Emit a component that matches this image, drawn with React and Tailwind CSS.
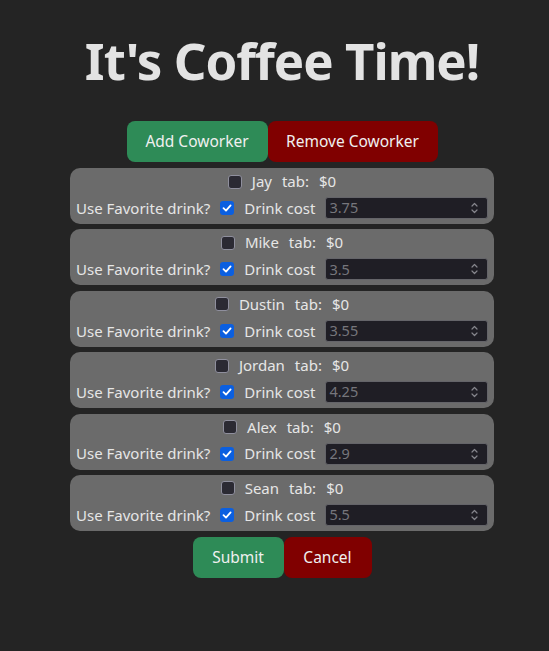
import React from "react";

const people = [
  { name: "Jay", cost: "3.75" },
  { name: "Mike", cost: "3.5" },
  { name: "Dustin", cost: "3.55" },
  { name: "Jordan", cost: "4.25" },
  { name: "Alex", cost: "2.9" },
  { name: "Sean", cost: "5.5" },
];

function Unchecked() {
  return (
    <span className="inline-block w-[14px] h-[14px] rounded-[3px] border border-[#8f8f9d] bg-[#2b2a33] shrink-0" />
  );
}

function Checked() {
  return (
    <span className="inline-flex items-center justify-center w-[14px] h-[14px] rounded-[3px] bg-[#0b5fe0] shrink-0">
      <svg width="10" height="10" viewBox="0 0 10 10" fill="none">
        <path d="M1.5 5.2 L4 7.6 L8.6 2.4" stroke="white" strokeWidth="1.8" strokeLinecap="round" strokeLinejoin="round" />
      </svg>
    </span>
  );
}

function Card({ p }) {
  return (
    <div className="w-[424px] h-[56px] bg-[#6b6b6b] rounded-[10px] pt-[3px] flex flex-col text-[#e6e6e6]">
      <div className="h-[21px] flex items-center justify-center gap-[10px] leading-[21px]">
        <Unchecked />
        <span>{p.name}</span>
        <span>tab:</span>
        <span>$0</span>
      </div>
      <div className="mt-[5px] h-[22px] flex items-center gap-[10px] pl-[6px] pr-[6px]">
        <span className="whitespace-nowrap">Use Favorite drink?</span>
        <Checked />
        <span className="whitespace-nowrap">Drink cost</span>
        <div className="flex-1 h-[22px] bg-[#1f1e25] border border-[#646469] rounded-[3px] flex items-center pl-[3px] pr-[8px] text-[#76767c] text-[14.5px]">
          <span className="flex-1">{p.cost}</span>
          <svg width="9" height="14" viewBox="0 0 9 14" fill="none">
            <path d="M2 5 L4.5 2.5 L7 5" stroke="#85858c" strokeWidth="1.2" strokeLinecap="round" strokeLinejoin="round" />
            <path d="M2 9 L4.5 11.5 L7 9" stroke="#85858c" strokeWidth="1.2" strokeLinecap="round" strokeLinejoin="round" />
          </svg>
        </div>
      </div>
    </div>
  );
}

export default function App() {
  return (
    <div className="min-h-[651px] bg-[#242424] flex flex-col items-center pl-[15px] text-[15px] text-[#e6e6e6] [font-family:'Noto_Sans',sans-serif]">
      <h1 className="mt-[32px] h-[56px] leading-[56px] text-[51px] font-bold text-[#e3e3e3] tracking-[-1px]">
        It's Coffee Time!
      </h1>
      <div className="mt-[33px] flex">
        <button className="w-[141px] h-[41px] rounded-[8px] bg-[#2e8b57] text-[#f0f0f0] text-[15.5px]">Add Coworker</button>
        <button className="w-[170px] h-[41px] rounded-[8px] bg-[#800000] text-[#f0f0f0] text-[15.5px]">Remove Coworker</button>
      </div>
      <div className="mt-[6px] flex flex-col gap-[5.4px]">
        {people.map((p) => (
          <Card key={p.name} p={p} />
        ))}
      </div>
      <div className="mt-[6px] flex">
        <button className="w-[91px] h-[41px] rounded-[8px] bg-[#2e8b57] text-[#f0f0f0] text-[15.5px]">Submit</button>
        <button className="w-[88px] h-[41px] rounded-[8px] bg-[#800000] text-[#f0f0f0] text-[15.5px]">Cancel</button>
      </div>
    </div>
  );
}
